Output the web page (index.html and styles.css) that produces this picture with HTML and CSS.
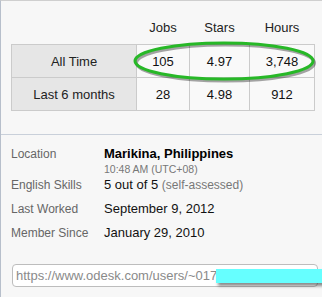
FILE: index.html
```html
<!DOCTYPE html>
<html lang="en">
<head>
    <meta charset="UTF-8">
    <title>Profile Stats</title>
    <link rel="stylesheet" href="styles.css">
</head>
<body>
    <div class="panel">
        <div class="stats">
            <table class="stats-table">
                <colgroup>
                    <col class="col-label">
                    <col class="col-jobs">
                    <col class="col-stars">
                    <col class="col-hours">
                </colgroup>
                <thead>
                    <tr>
                        <th class="blank"></th>
                        <th>Jobs</th>
                        <th>Stars</th>
                        <th>Hours</th>
                    </tr>
                </thead>
                <tbody>
                    <tr>
                        <td class="label">All Time</td>
                        <td>105</td>
                        <td>4.97</td>
                        <td>3,748</td>
                    </tr>
                    <tr>
                        <td class="label">Last 6 months</td>
                        <td>28</td>
                        <td>4.98</td>
                        <td>912</td>
                    </tr>
                </tbody>
            </table>
            <svg class="highlight" width="190" height="46" viewBox="0 0 190 46">
                <ellipse cx="92" cy="23" rx="89" ry="18" fill="none" stroke="rgba(0,0,0,0.35)" stroke-width="3" transform="translate(1.5,2)"/>
                <ellipse cx="92" cy="23" rx="89" ry="18" fill="none" stroke="#27b827" stroke-width="3"/>
            </svg>
        </div>

        <div class="info">
            <div class="row row-location">
                <span class="key">Location</span>
                <div class="val">
                    <strong>Marikina, Philippines</strong>
                    <small>10:48 AM (UTC+08)</small>
                </div>
            </div>
            <div class="row">
                <span class="key">English Skills</span>
                <span class="val">5 out of 5 <small class="inline">(self-assessed)</small></span>
            </div>
            <div class="row">
                <span class="key">Last Worked</span>
                <span class="val">September 9, 2012</span>
            </div>
            <div class="row">
                <span class="key">Member Since</span>
                <span class="val">January 29, 2010</span>
            </div>
        </div>

        <div class="link-box">
            <input type="text" class="profile-url" value="https://www.odesk.com/users/~017" readonly>
            <div class="redact"></div>
        </div>
    </div>
</body>
</html>
```

FILE: styles.css
```css
* { margin: 0; padding: 0; box-sizing: border-box; }
body { font-family: "Liberation Sans", Arial, sans-serif; background: #f7f7f7; color: #111; overflow: hidden; }

.panel {
    border-left: 1px solid #b7bfcb; border-top: 1px solid #cfcfcf;
    height: 297px; overflow: hidden;
}

.stats { position: relative; padding: 19px 0 0 10px; }
.stats-table { border-collapse: collapse; table-layout: fixed; width: 303px; font-size: 13px; }
.col-label { width: 125px; }
.col-jobs { width: 53px; }
.col-stars { width: 60px; }
.col-hours { width: 65px; }
.stats-table th {
    font-weight: normal; color: #222; line-height: 16px;
    padding: 0 0 8px; text-align: center;
}
.stats-table td {
    height: 33px; border: 1px solid #cbcbcb; text-align: center;
    background: #f9f9f9; color: #111; padding: 0;
}
.stats-table td.label { background: #e6e6e6; color: #222; }
.highlight { position: absolute; left: 131px; top: 37px; }

.info {
    margin-top: 23px; border-top: 1px solid #c9d0da;
    padding: 11px 0 0 10px;
}
.row { display: flex; line-height: 16px; margin-bottom: 8px; }
.row-location { margin-bottom: 1px; }
.key { width: 93px; font-size: 12px; color: #666; flex-shrink: 0; }
.val { font-size: 13px; color: #111; }
.val strong { display: block; font-size: 13px; color: #000; }
.val small { display: block; font-size: 10.5px; line-height: 14px; color: #777; }
.val small.inline { display: inline; font-size: 12px; }

.link-box { position: relative; margin: 23px 0 0 11px; }
.profile-url {
    display: block; width: 306px; height: 23px; padding: 0 3px;
    border: 1px solid #bdbdbd; border-radius: 4px; background: #fff;
    font-family: "Liberation Sans", Arial, sans-serif; font-size: 13px; color: #8a8a8a;
}
.redact {
    position: absolute; left: 204px; top: 5px; width: 110px; height: 14px;
    background: #66ffff; box-shadow: 2px 3px 3px rgba(0,0,0,0.45);
}
```
